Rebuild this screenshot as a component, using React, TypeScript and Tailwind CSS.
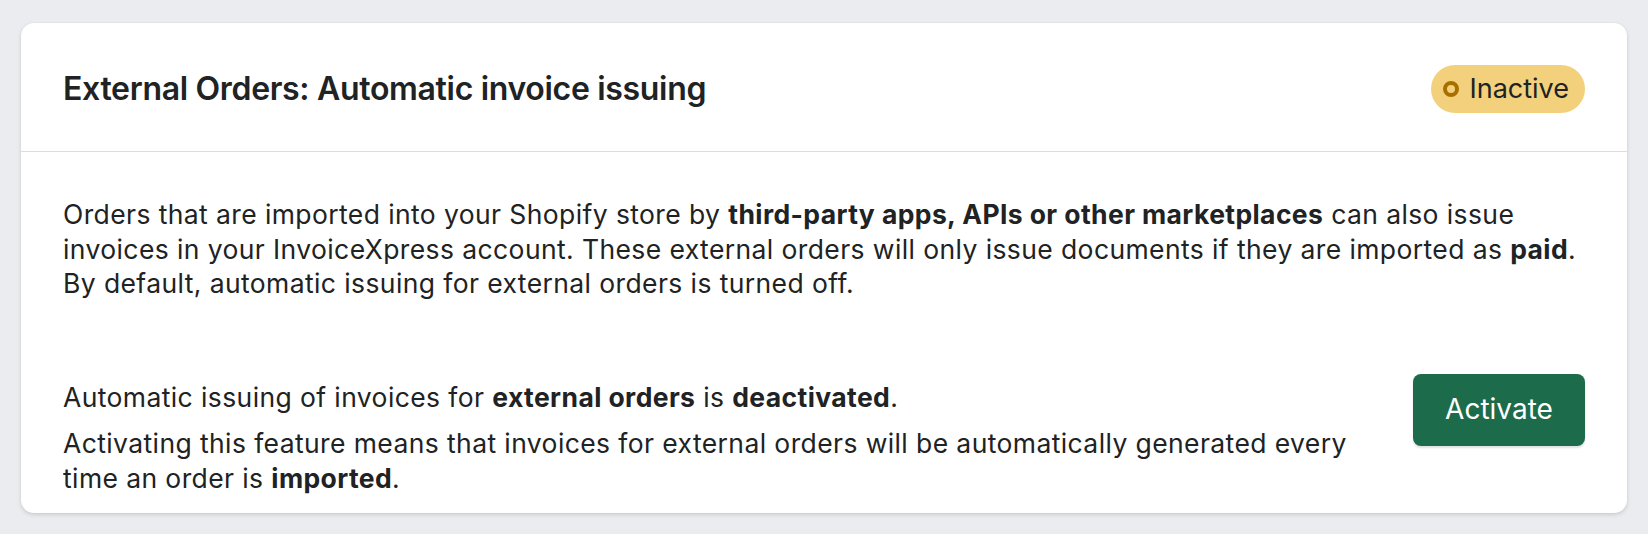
import React from 'react';

const StatusBadge: React.FC<{ label: string }> = ({ label }) => (
  <span className="inline-flex items-center gap-[10px] h-[48px] pl-[12px] pr-[16px] rounded-full bg-[#f3d17c] text-[27px] leading-none text-[#202223]">
    <span className="w-[16px] h-[16px] rounded-full border-[4px] border-[#a86f00]" />
    <span>{label}</span>
  </span>
);

export default function App() {
  return (
    <div className="min-h-[534px] bg-[#ebecef] pt-[23px] px-[21px] pb-[21px] font-['Inter',sans-serif] text-[#202223]">
      <div className="bg-white rounded-[13px] shadow-[0_2px_4px_rgba(0,0,0,0.12),0_0_0_1px_rgba(0,0,0,0.02)] overflow-hidden">
        {/* Header */}
        <div className="h-[129px] px-[42px] pt-[3px] flex items-center justify-between border-b border-[#dcdde0]">
          <h2 className="text-[32px] font-semibold tracking-[-0.01em]">
            External Orders: Automatic invoice issuing
          </h2>
          <StatusBadge label="Inactive" />
        </div>

        {/* Body */}
        <div className="px-[42px] pt-[45px] pb-[18px] text-[26.5px] leading-[34.5px] tracking-[0.015em]">
          <p>
            Orders that are imported into your Shopify store by{' '}
            <strong className="font-bold">third-party apps, APIs or other marketplaces</strong> can also issue
            invoices in your InvoiceXpress account. These external orders will only issue documents if they are
            imported as <strong className="font-bold">paid</strong>. By default, automatic issuing for external
            orders is turned off.
          </p>

          <div className="mt-[73px] flex items-start justify-between gap-[42px]">
            <div className="pt-[6px]">
              <p>
                Automatic issuing of invoices for <strong className="font-bold">external orders</strong> is{' '}
                <strong className="font-bold">deactivated</strong>.
              </p>
              <p className="mt-[12px]">
                Activating this feature means that invoices for external orders will be automatically generated
                every time an order is <strong className="font-bold">imported</strong>.
              </p>
            </div>
            <button className="shrink-0 w-[172px] h-[72px] rounded-[8px] bg-[#1c6b4b] text-white text-[28px] font-normal tracking-normal shadow-[0_2px_2px_rgba(0,0,0,0.12)]">
              Activate
            </button>
          </div>
        </div>
      </div>
    </div>
  );
}
